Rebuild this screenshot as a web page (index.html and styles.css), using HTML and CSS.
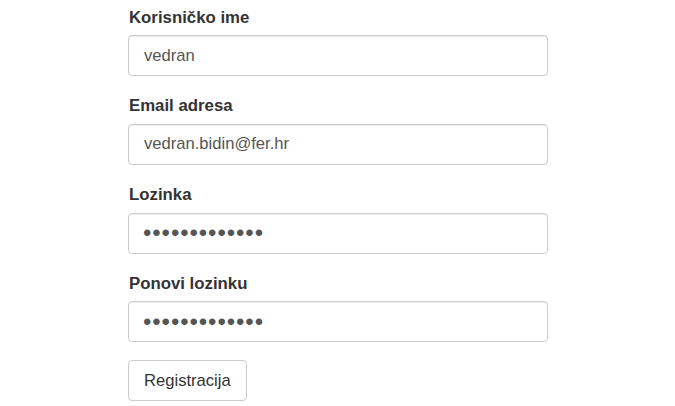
FILE: index.html
```html
<!DOCTYPE html>
<html>
<head>
<meta charset="utf-8">
<link rel="stylesheet" href="styles.css">
</head>
<body>
<form class="form">
  <div class="group">
    <label class="label">Korisničko ime</label>
    <input class="input" type="text" value="vedran">
  </div>
  <div class="group">
    <label class="label">Email adresa</label>
    <input class="input" type="text" value="vedran.bidin@fer.hr">
  </div>
  <div class="group">
    <label class="label">Lozinka</label>
    <input class="input pw" type="password" value="abcdefghijklm">
  </div>
  <div class="group">
    <label class="label">Ponovi lozinku</label>
    <input class="input pw" type="password" value="abcdefghijklm">
  </div>
  <button class="btn" type="button">Registracija</button>
</form>
</body>
</html>
```
FILE: styles.css
```css
html, body {
  margin: 0;
  padding: 0;
  background: #fff;
}
body {
  font-family: "Liberation Sans", Arial, sans-serif;
  font-size: 16px;
  color: #333;
}
.form {
  width: 420px;
  margin: 6.6px 0 0 128px;
  display: flex;
  flex-direction: column;
}
.group {
  display: flex;
  flex-direction: column;
  margin-bottom: 19px;
}
.label {
  font-weight: bold;
  font-size: 16.8px;
  line-height: 22.67px;
  height: 22.67px;
  margin: 0 0 6px 1px;
  color: #333;
}
.input {
  box-sizing: border-box;
  height: 41px;
  width: 420px;
  padding: 0 15px;
  border: 1px solid #ccc;
  border-radius: 4px;
  box-shadow: inset 0 1px 1px rgba(0,0,0,0.075);
  font-family: "Liberation Sans", Arial, sans-serif;
  font-size: 16.6px;
  color: #555;
  background: #fff;
  outline: none;
}
.pw {
  font-size: 24px;
  letter-spacing: 0.9px;
  padding-left: 14px;
}
.btn {
  align-self: flex-start;
  box-sizing: border-box;
  height: 41px;
  padding: 0 15px;
  margin-top: -1.2px;
  border: 1px solid #ccc;
  border-radius: 4px;
  background: #fff;
  font-family: "Liberation Sans", Arial, sans-serif;
  font-size: 16.6px;
  color: #333;
}
```
